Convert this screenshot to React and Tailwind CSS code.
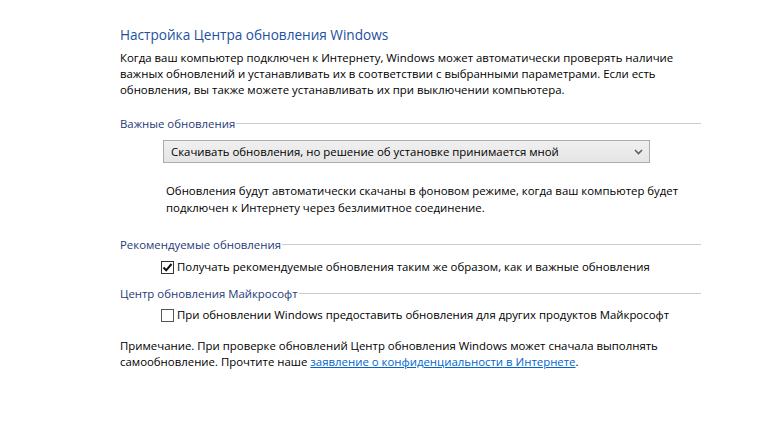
export default function App() {
  const font = { fontFamily: '"Segoe UI", "Open Sans", "Noto Sans", sans-serif' };
  return (
    <div className="w-[763px] h-[441px] bg-white text-black overflow-hidden whitespace-nowrap" style={font}>
      <div className="pl-[120px] pt-[24px] w-[701px]">
        <div className="text-[13.6px] leading-[22px] text-[#1e4fa0]">Настройка Центра обновления Windows</div>
        <div className="mt-[4px] text-[11.4px] leading-[16px]">
          <p>Когда ваш компьютер подключен к Интернету, Windows может автоматически проверять наличие</p>
          <p>важных обновлений и устанавливать их в соответствии с выбранными параметрами. Если есть</p>
          <p>обновления, вы также можете устанавливать их при выключении компьютера.</p>
        </div>

        <div className="mt-[18px] flex items-center gap-[1px] text-[11.4px] leading-[16px]">
          <span className="text-[#1e3a78]">Важные обновления</span>
          <div className="flex-1 h-px bg-[#c9cdd2] -mt-[1px]" />
        </div>

        <div className="mt-[8px] ml-[43px] w-[487px] h-[23px] border border-[#acacac] bg-gradient-to-b from-[#f0f0f0] to-[#e5e5e5] flex items-center justify-between pl-[7px] pr-[6px] text-[11.4px]">
          <span>Скачивать обновления, но решение об установке принимается мной</span>
          <svg width="9" height="6" viewBox="0 0 9 6">
            <path d="M1 1 L4.5 4.5 L8 1" stroke="#606060" strokeWidth="1.6" fill="none" />
          </svg>
        </div>

        <div className="mt-[19px] ml-[46px] text-[11.4px] leading-[17px]">
          <p>Обновления будут автоматически скачаны в фоновом режиме, когда ваш компьютер будет</p>
          <p>подключен к Интернету через безлимитное соединение.</p>
        </div>

        <div className="mt-[21px] flex items-center gap-[1px] text-[11.4px] leading-[16px]">
          <span className="text-[#1e3a78]">Рекомендуемые обновления</span>
          <div className="flex-1 h-px bg-[#c9cdd2] -mt-[1px]" />
        </div>

        <div className="mt-[6px] ml-[41px] flex items-center text-[11.4px] leading-[16px]">
          <div className="w-[13px] h-[13px] border border-[#333] bg-white flex items-center justify-center">
            <svg width="11" height="11" viewBox="0 0 11 11">
              <path d="M1.5 5.5 L4.2 8.3 L9.5 2" stroke="#111" strokeWidth="2" fill="none" />
            </svg>
          </div>
          <span className="ml-[3px]">Получать рекомендуемые обновления таким же образом, как и важные обновления</span>
        </div>

        <div className="mt-[11px] flex items-center gap-[1px] text-[11.4px] leading-[16px]">
          <span className="text-[#1e3a78]">Центр обновления Майкрософт</span>
          <div className="flex-1 h-px bg-[#c9cdd2] -mt-[1px]" />
        </div>

        <div className="mt-[5px] ml-[41px] flex items-center text-[11.4px] leading-[16px]">
          <div className="w-[13px] h-[13px] border border-[#555] bg-white" />
          <span className="ml-[3px]">При обновлении Windows предоставить обновления для других продуктов Майкрософт</span>
        </div>

        <div className="mt-[15px] text-[11.4px] leading-[16px]">
          <p>Примечание. При проверке обновлений Центр обновления Windows может сначала выполнять</p>
          <p>
            самообновление. Прочтите наше{" "}
            <a className="text-[#0066cc] underline">заявление о конфиденциальности в Интернете</a>.
          </p>
        </div>
      </div>
    </div>
  );
}
